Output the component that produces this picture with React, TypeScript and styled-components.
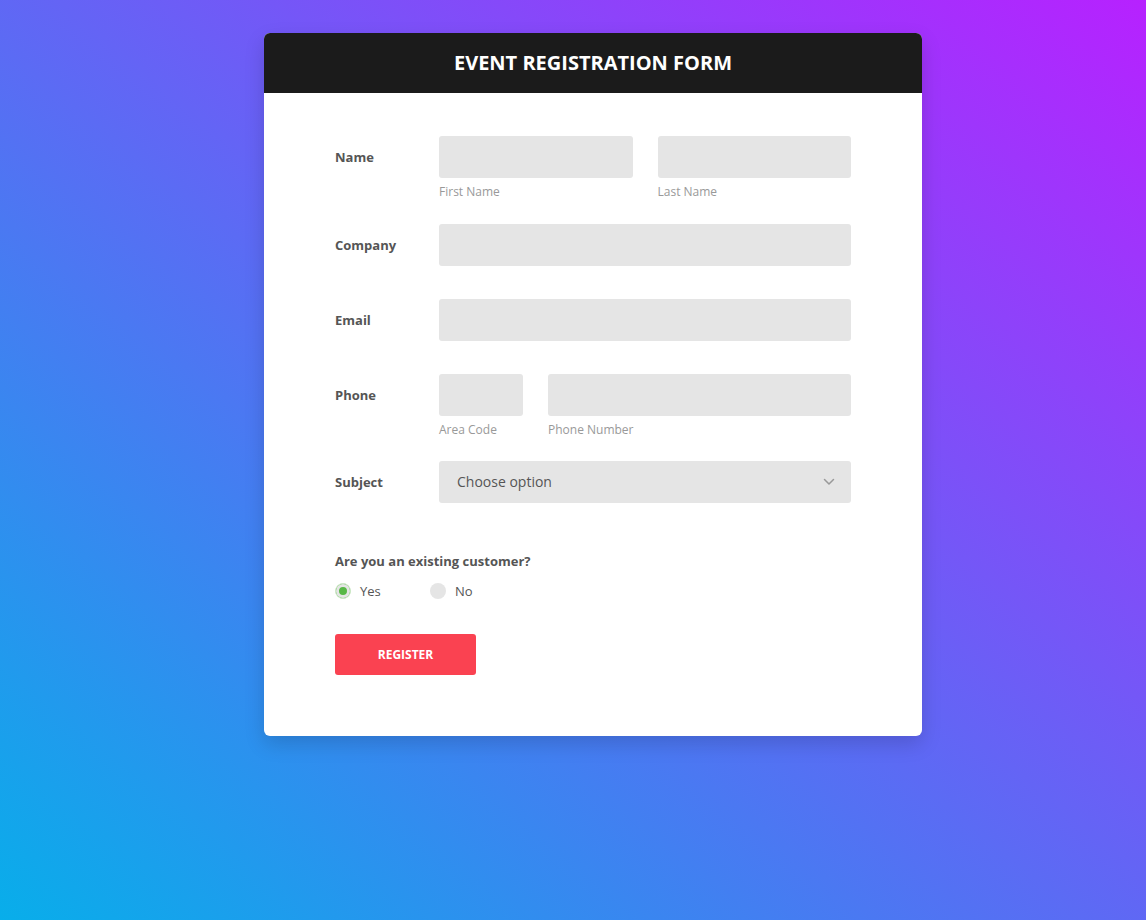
import React from "react";
import styled, { createGlobalStyle } from "styled-components";

const GlobalStyle = createGlobalStyle`
  * { box-sizing: border-box; }
  html, body { margin: 0; padding: 0; }
  body {
    font-family: "Open Sans", "Noto Sans", sans-serif;
    min-height: 920px;
    background: linear-gradient(to top right, #08aeea 0%, #b721ff 100%);
    background-attachment: fixed;
  }
`;

const Page = styled.div`
  min-height: 920px;
  display: flex;
  justify-content: center;
  align-items: flex-start;
  padding: 33px 0 0 40px;
`;

const Card = styled.div`
  width: 658px;
  background: #fff;
  border-radius: 6px;
  overflow: hidden;
  box-shadow: 0 8px 20px rgba(0, 0, 0, 0.15);
`;

const Header = styled.div`
  height: 60px;
  background: #1b1b1b;
  display: flex;
  align-items: center;
  justify-content: center;
  padding-bottom: 1px;
`;

const Title = styled.h2`
  margin: 0;
  color: #fff;
  font-size: 20px;
  font-weight: 700;
  letter-spacing: 0;
`;

const Body = styled.form`
  padding: 43px 71px 61px 71px;
  display: flex;
  flex-direction: column;
`;

const Row = styled.div<{ $mb: number }>`
  display: flex;
  align-items: flex-start;
  margin-bottom: ${(p) => p.$mb}px;
`;

const Label = styled.label`
  width: 104px;
  flex: none;
  height: 42px;
  display: flex;
  align-items: center;
  padding-bottom: 1px;
  font-size: 13px;
  font-weight: 700;
  color: #555;
`;

const Fields = styled.div<{ $gap: number }>`
  flex: 1;
  display: flex;
  gap: ${(p) => p.$gap}px;
`;

const Field = styled.div<{ $w?: number }>`
  display: flex;
  flex-direction: column;
  ${(p) => (p.$w ? `width: ${p.$w}px; flex: none;` : "flex: 1;")}
`;

const Input = styled.input`
  height: 42px;
  width: 100%;
  border: none;
  outline: none;
  border-radius: 3px;
  background: #e5e5e5;
  padding: 0 18px;
  font-family: inherit;
  font-size: 14px;
  color: #555;
`;

const Helper = styled.span`
  display: block;
  margin-top: 6px;
  height: 16px;
  line-height: 16px;
  font-size: 12px;
  color: #999;
`;

const SelectBox = styled.div`
  flex: 1;
  height: 42px;
  border-radius: 3px;
  background: #e5e5e5;
  padding: 0 16px 1px 18px;
  display: flex;
  align-items: center;
  justify-content: space-between;
  font-size: 14px;
  color: #555;
`;

const Question = styled.div`
  margin-top: 49px;
  font-size: 13px;
  font-weight: 700;
  color: #555;
  line-height: 18px;
`;

const RadioGroup = styled.div`
  display: flex;
  margin-top: 12px;
`;

const RadioOption = styled.label`
  width: 95px;
  display: flex;
  align-items: center;
  gap: 9px;
  font-size: 13px;
  color: #555;
  line-height: 18px;
`;

const RadioCircle = styled.span<{ $checked?: boolean }>`
  width: 16px;
  height: 16px;
  border-radius: 50%;
  background: ${(p) => (p.$checked ? "#57b846" : "#e5e5e5")};
  box-shadow: ${(p) => (p.$checked ? "inset 0 0 0 3px #e5e5e5" : "none")};
  border: ${(p) => (p.$checked ? "1px solid #cfe9c9" : "none")};
  flex: none;
`;

const Button = styled.button`
  margin-top: 34px;
  width: 141px;
  height: 41px;
  border: none;
  border-radius: 3px;
  background: #fa4251;
  color: #fff;
  font-family: inherit;
  font-size: 12px;
  font-weight: 700;
  text-transform: uppercase;
  cursor: pointer;
`;

const Chevron = () => (
  <svg width="12" height="8" viewBox="0 0 12 8" fill="none">
    <path d="M1.5 1.5L6 6L10.5 1.5" stroke="#999" strokeWidth="1.5" strokeLinecap="round" strokeLinejoin="round" />
  </svg>
);

export default function App() {
  return (
    <>
      <GlobalStyle />
      <Page>
        <Card>
          <Header>
            <Title>EVENT REGISTRATION FORM</Title>
          </Header>
          <Body onSubmit={(e) => e.preventDefault()}>
            <Row $mb={24}>
              <Label>Name</Label>
              <Fields $gap={25}>
                <Field>
                  <Input type="text" />
                  <Helper>First Name</Helper>
                </Field>
                <Field>
                  <Input type="text" />
                  <Helper>Last Name</Helper>
                </Field>
              </Fields>
            </Row>
            <Row $mb={33}>
              <Label>Company</Label>
              <Fields $gap={0}>
                <Field>
                  <Input type="text" />
                </Field>
              </Fields>
            </Row>
            <Row $mb={33}>
              <Label>Email</Label>
              <Fields $gap={0}>
                <Field>
                  <Input type="email" />
                </Field>
              </Fields>
            </Row>
            <Row $mb={23}>
              <Label>Phone</Label>
              <Fields $gap={25}>
                <Field $w={84}>
                  <Input type="text" />
                  <Helper>Area Code</Helper>
                </Field>
                <Field>
                  <Input type="text" />
                  <Helper>Phone Number</Helper>
                </Field>
              </Fields>
            </Row>
            <Row $mb={0}>
              <Label>Subject</Label>
              <SelectBox>
                <span>Choose option</span>
                <Chevron />
              </SelectBox>
            </Row>
            <Question>Are you an existing customer?</Question>
            <RadioGroup>
              <RadioOption>
                <RadioCircle $checked />
                Yes
              </RadioOption>
              <RadioOption>
                <RadioCircle />
                No
              </RadioOption>
            </RadioGroup>
            <div>
              <Button type="submit">Register</Button>
            </div>
          </Body>
        </Card>
      </Page>
    </>
  );
}
